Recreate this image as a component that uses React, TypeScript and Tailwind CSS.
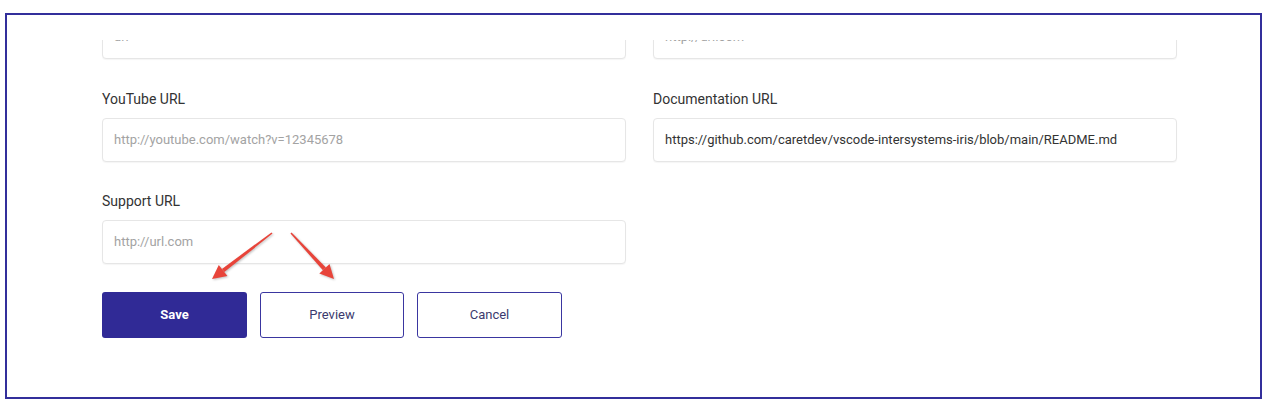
import React from "react";

const Field = ({
  label,
  placeholder,
  value,
}: {
  label?: string;
  placeholder?: string;
  value?: string;
}) => (
  <div className="flex flex-col">
    {label && (
      <label className="text-[14px] leading-5 text-[#333333] mb-[9px]">{label}</label>
    )}
    <div className="h-[44px] rounded-[4px] border border-[#e6e6e6] bg-white shadow-[0_1px_1px_rgba(0,0,0,0.04)] flex items-center px-[11px] text-[13px]">
      {value ? (
        <span className="text-[#333333]">{value}</span>
      ) : (
        <span className="text-[#a3a3a3]">{placeholder}</span>
      )}
    </div>
  </div>
);

export default function App() {
  return (
    <div
      className="relative w-[1271px] h-[409px] bg-white overflow-hidden"
      style={{ fontFamily: "Roboto, 'Liberation Sans', sans-serif" }}
    >
      <div className="ml-[5px] mt-[13px] w-[1257px] h-[386px] border-2 border-[#332f9b] pt-[25px]">
        <div className="h-[355px] overflow-hidden">
          <div className="-mt-[25px] pl-[95px] w-[1170px]">
            {/* top row (scrolled, partly hidden) */}
            <div className="grid grid-cols-[524px_524px] gap-x-[27px]">
              <Field placeholder="url" />
              <Field placeholder="http://url.com" />
            </div>

            <div className="grid grid-cols-[524px_524px] gap-x-[27px] mt-[30px]">
              <Field label="YouTube URL" placeholder="http://youtube.com/watch?v=12345678" />
              <Field
                label="Documentation URL"
                value="https://github.com/caretdev/vscode-intersystems-iris/blob/main/README.md"
              />
            </div>

            <div className="grid grid-cols-[524px_524px] gap-x-[27px] mt-[29px]">
              <Field label="Support URL" placeholder="http://url.com" />
            </div>

            <div className="flex gap-[13px] mt-[28px]">
              <button className="w-[145px] h-[46px] rounded-[3px] bg-[#302a96] text-white text-[13px] font-bold">
                Save
              </button>
              <button className="w-[144px] h-[46px] rounded-[3px] border border-[#3a36a0] bg-white text-[#3b3a6e] text-[13px]">
                Preview
              </button>
              <button className="w-[145px] h-[46px] rounded-[3px] border border-[#3a36a0] bg-white text-[#3b3a6e] text-[13px]">
                Cancel
              </button>
            </div>
          </div>
        </div>
      </div>

      {/* annotation arrows */}
      <svg
        className="absolute left-0 top-0 pointer-events-none"
        width="1271"
        height="409"
        viewBox="0 0 1271 409"
        style={{ filter: "drop-shadow(1px 1px 1px rgba(0,0,0,0.25))" }}
      >
        <g fill="#e8443a">
          <polygon points="272.5,233.6 271.5,232.4 221.9,268.9 224.3,272.1" />
          <polygon points="212,279 227.4,276.1 218.8,264.9" />
          <polygon points="290.45,233.5 291.55,232.5 325.9,267.4 322.9,270.2" />
          <polygon points="334,279 319.3,273.6 329.5,264.0" />
        </g>
      </svg>
    </div>
  );
}
